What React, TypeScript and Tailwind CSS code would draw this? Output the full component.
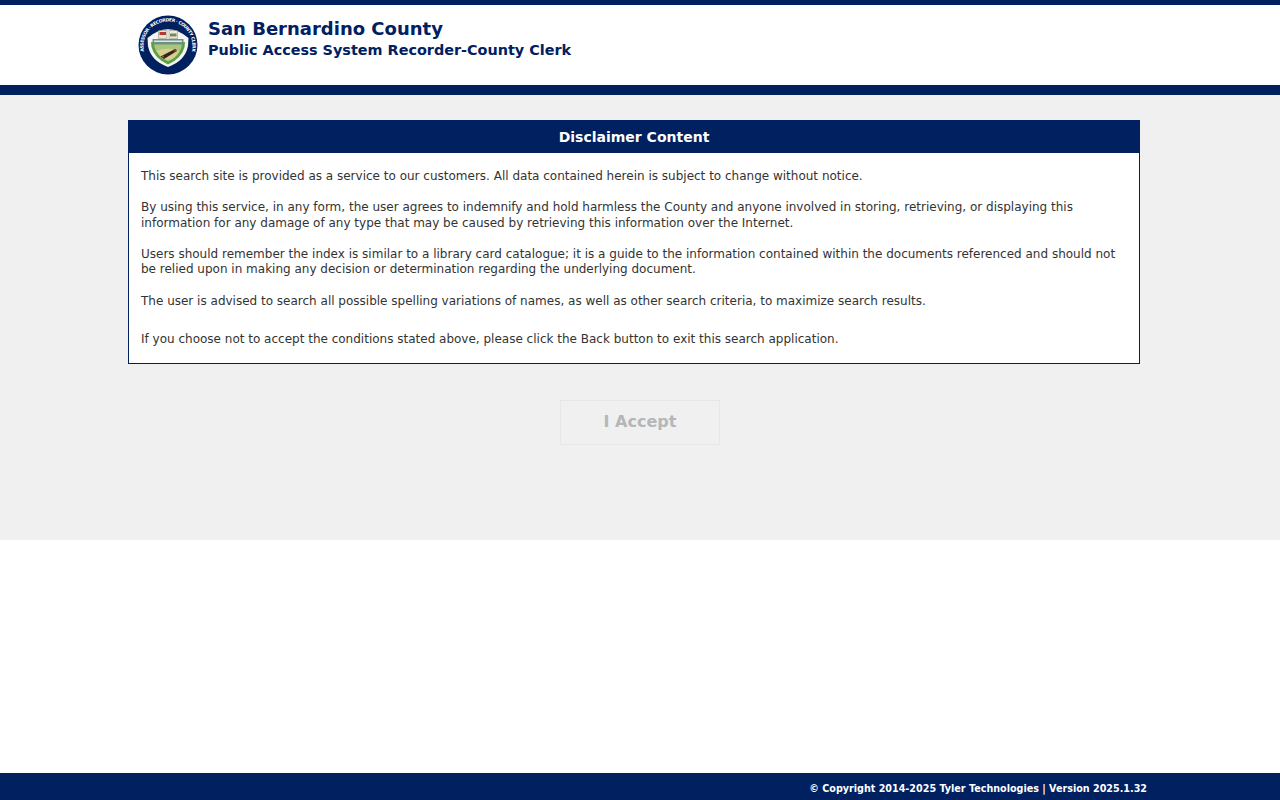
export default function App() {
  return (
    <div className="min-h-screen flex flex-col bg-white font-['DejaVu_Sans',sans-serif] text-[#333]">
      <header className="h-[95px] border-t-[5px] border-b-[10px] border-[#002060] flex items-center pl-[138px] shrink-0">
        <Seal />
        <div className="ml-[10px] mb-[12px] text-[#002060] font-bold">
          <div className="text-[18px] leading-[22px]">San Bernardino County</div>
          <div className="text-[14.4px] leading-[20px]">Public Access System Recorder-County Clerk</div>
        </div>
      </header>
      <main className="h-[445px] bg-[#f0f0f0] pt-[25px] shrink-0">
        <section className="ml-[128px] w-[1012px] h-[244px] border border-[#002060] bg-white">
          <h1 className="h-[32px] bg-[#002060] text-white text-[14px] font-bold flex items-center justify-center">Disclaimer Content</h1>
          <div className="px-[12px] pt-[16px] text-[12px] leading-[15.5px]">
            <p className="mb-[15.5px]">This search site is provided as a service to our customers. All data contained herein is subject to change without notice.</p>
            <p className="mb-[15.5px]">By using this service, in any form, the user agrees to indemnify and hold harmless the County and anyone involved in storing, retrieving, or displaying this information for any damage of any type that may be caused by retrieving this information over the Internet.</p>
            <p className="mb-[16.5px]">Users should remember the index is similar to a library card catalogue; it is a guide to the information contained within the documents referenced and should not be relied upon in making any decision or determination regarding the underlying document.</p>
            <p className="mb-[22.5px]">The user is advised to search all possible spelling variations of names, as well as other search criteria, to maximize search results.</p>
            <p>If you choose not to accept the conditions stated above, please click the Back button to exit this search application.</p>
          </div>
        </section>
        <div className="flex justify-center mt-[36px]">
          <button disabled className="w-[160px] h-[45px] border border-[#e6e6e6] bg-[#f0f0f0] text-[#b4b7b9] text-[16px] font-bold pb-[2px]">I Accept</button>
        </div>
      </main>
      <div className="flex-1" />
      <footer className="h-[27px] bg-[#002060] text-white text-[9.6px] font-bold flex items-center justify-end pr-[133px] pt-[6px] shrink-0">© Copyright 2014-2025 Tyler Technologies | Version 2025.1.32</footer>
    </div>
  );
}

function Seal() {
  return (
    <svg width="60" height="60" viewBox="0 0 60 60" className="shrink-0">
      <circle cx="30" cy="30" r="29.5" fill="#002060" />
      <defs>
        <path id="sealArc" d="M10 45 A24.5 24.5 0 1 1 50 45" />
      </defs>
      <text fontSize="4.5" fontWeight="700" fill="#fff" fontFamily="'DejaVu Sans',sans-serif" textLength="88">
        <textPath href="#sealArc" startOffset="50%" textAnchor="middle">ASSESSOR · RECORDER · COUNTY CLERK</textPath>
      </text>
      <circle cx="30" cy="30" r="21" fill="#002060" />
      <path d="M9.5 23 Q30 5.5 50.5 23 L50 31 Q47 46 30 52 Q13 46 10 31 Z" fill="#f6f6f0" />
      <path d="M13 27 L47 27 L46.5 32 Q44 43 30 49.5 Q16 43 13.5 32 Z" fill="#5c9f47" />
      <path d="M16 28 L44 28 L43.5 32 Q41.5 41 30 46.5 Q18.5 41 16.5 32 Z" fill="#a9c77c" />
      <path d="M20.5 15.5 h8.5 v8 h-8.5 Z" fill="#e8e4d6" stroke="#6b6b5a" strokeWidth="0.4" />
      <path d="M21.5 17 h6.5 v3 h-6.5 Z" fill="#b5392f" />
      <path d="M31 15.5 h8.5 v8 h-8.5 Z" fill="#eeeadc" stroke="#6b6b5a" strokeWidth="0.4" />
      <path d="M32 18.5 h6.5 v3 h-6.5 Z" fill="#6f8a5a" />
      <path d="M14.5 24 h31 v5.5 h-31 Z" fill="#6f9185" />
      <path d="M16 25.5 h28 v1.5 h-28 Z" fill="#dfe8e8" />
      <path d="M18.5 36 Q30 31.5 41.5 36 L36.5 42.5 Q30 47 23.5 42.5 Z" fill="#d9cf92" />
      <path d="M22.5 41.5 L37 34 L39 36 L26 44 Z" fill="#33261c" />
      <circle cx="37" cy="35.5" r="1.5" fill="#8a3b22" />
      <circle cx="25" cy="41.5" r="1" fill="#a8572d" />
    </svg>
  );
}
